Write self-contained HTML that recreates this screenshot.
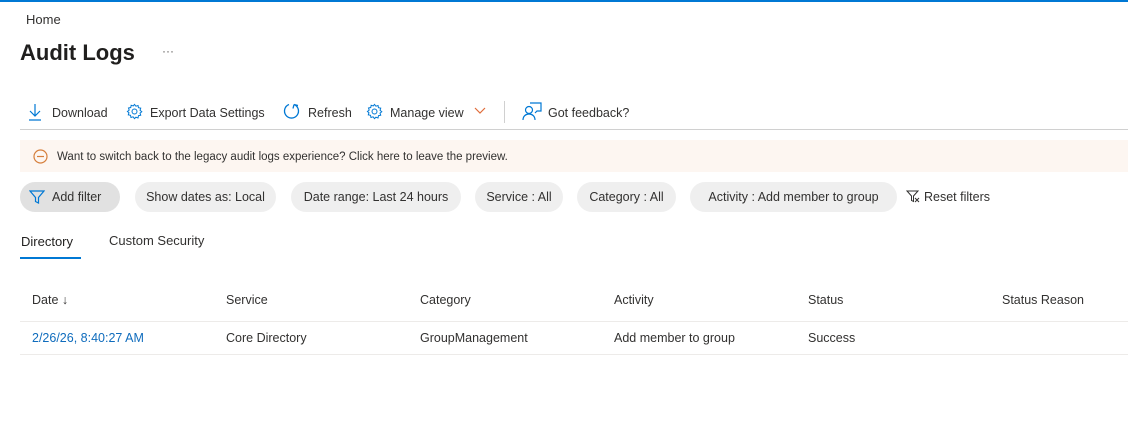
<!DOCTYPE html>
<html><head><meta charset="utf-8"><style>
*{margin:0;padding:0;box-sizing:border-box}
body{width:1128px;height:424px;background:#fff;font-family:"Liberation Sans",sans-serif;color:#323130;position:relative;overflow:hidden;font-size:12.5px}
.a{position:absolute;white-space:nowrap}
.chip{position:absolute;top:182px;height:30px;border-radius:15px;background:#efefef;display:flex;align-items:center;justify-content:center;font-size:12.5px;color:#323130}
.ic{position:absolute}
</style></head><body>
<div class="a" style="left:0;top:0;width:1128px;height:2px;background:#0078d4"></div>
<div class="a" style="left:26px;top:12px;font-size:13px;color:#323130">Home</div>
<div class="a" style="left:20px;top:40px;font-size:22px;font-weight:bold;color:#201f1e">Audit Logs</div>
<div class="a" style="left:162px;top:44px;font-size:12px;color:#605e5c">···</div>

<svg class="ic" style="left:28px;top:103px" width="14" height="18" viewBox="0 0 14 18"><path d="M7 1v12M2 8l5 5 5-5M1 17h12" fill="none" stroke="#0078d4" stroke-width="1.2"/></svg>
<div class="a" style="left:52px;top:106px">Download</div>
<svg class="ic" style="left:126px;top:103px" width="17" height="17" viewBox="0 0 24 24"><path d="M12 2l2 2.5 3-1 .6 3.2 3.2.6-1 3 2.5 2-2.5 2 1 3-3.2.6-.6 3.2-3-1L12 22l-2-2.5-3 1-.6-3.2-3.2-.6 1-3L2 12l2.5-2-1-3 3.2-.6L7.3 3.2l3 1z" fill="none" stroke="#0078d4" stroke-width="1.4"/><circle cx="12" cy="12" r="3.5" fill="none" stroke="#0078d4" stroke-width="1.4"/></svg>
<div class="a" style="left:150px;top:106px">Export Data Settings</div>
<svg class="ic" style="left:283px;top:102px" width="17" height="18" viewBox="0 0 17 18"><path d="M6 2.5A7 7 0 1 0 11 2.5M11 2.5l-1 4M11 2.5l4 1" fill="none" stroke="#0078d4" stroke-width="1.3"/></svg>
<div class="a" style="left:308px;top:106px">Refresh</div>
<svg class="ic" style="left:366px;top:103px" width="17" height="17" viewBox="0 0 24 24"><path d="M12 2l2 2.5 3-1 .6 3.2 3.2.6-1 3 2.5 2-2.5 2 1 3-3.2.6-.6 3.2-3-1L12 22l-2-2.5-3 1-.6-3.2-3.2-.6 1-3L2 12l2.5-2-1-3 3.2-.6L7.3 3.2l3 1z" fill="none" stroke="#0078d4" stroke-width="1.4"/><circle cx="12" cy="12" r="3.5" fill="none" stroke="#0078d4" stroke-width="1.4"/></svg>
<div class="a" style="left:390px;top:106px">Manage view</div>
<svg class="ic" style="left:474px;top:107px" width="12" height="8" viewBox="0 0 12 8"><path d="M1 1l5 5 5-5" fill="none" stroke="#e06c3a" stroke-width="1.2"/></svg>
<div class="a" style="left:504px;top:101px;width:1px;height:22px;background:#d0d0d0"></div>
<svg class="ic" style="left:522px;top:102px" width="20" height="19" viewBox="0 0 20 19"><circle cx="7" cy="8" r="3.5" fill="none" stroke="#0078d4" stroke-width="1.2"/><path d="M1 18c0-4 3-6 6-6s6 2 6 6M8 1h11v8h-4l-2 2" fill="none" stroke="#0078d4" stroke-width="1.2"/></svg>
<div class="a" style="left:548px;top:106px">Got feedback?</div>
<div class="a" style="left:20px;top:129px;width:1108px;height:1px;background:#d0d0d0"></div>

<div class="a" style="left:20px;top:140px;width:1108px;height:32px;background:#fdf6f1"></div>
<svg class="ic" style="left:33px;top:149px" width="15" height="15" viewBox="0 0 15 15"><circle cx="7.5" cy="7.5" r="6.5" fill="none" stroke="#d67f3c" stroke-width="1.2"/><path d="M4 7.5h7" stroke="#d67f3c" stroke-width="1.2"/></svg>
<div class="a" style="left:57px;top:151px;font-size:11.5px">Want to switch back to the legacy audit logs experience? Click here to leave the preview.</div>

<div class="chip" style="left:20px;width:100px;background:#e1e1e1;justify-content:flex-start;padding-left:9px">
<svg width="16" height="16" viewBox="0 0 16 16" style="margin-right:7px"><path d="M1 2h14L9.5 8.5V14l-3-1.5V8.5z" fill="none" stroke="#0078d4" stroke-width="1.2"/></svg>Add filter</div>
<div class="chip" style="left:135px;width:141px">Show dates as: Local</div>
<div class="chip" style="left:291px;width:170px">Date range: Last 24 hours</div>
<div class="chip" style="left:475px;width:88px">Service : All</div>
<div class="chip" style="left:577px;width:99px">Category : All</div>
<div class="chip" style="left:690px;width:207px">Activity : Add member to group</div>
<svg class="ic" style="left:906px;top:190px" width="14" height="13" viewBox="0 0 14 13"><path d="M1 1h11L7.5 6v5.5L5.5 10.5V6z" fill="none" stroke="#323130" stroke-width="1"/><path d="M9 8l4 4M13 8l-4 4" stroke="#323130" stroke-width="1"/></svg>
<div class="a" style="left:924px;top:190px">Reset filters</div>

<div class="a" style="left:21px;top:234px;font-size:13px;color:#201f1e">Directory</div>
<div class="a" style="left:109px;top:233px;font-size:13px">Custom Security</div>
<div class="a" style="left:20px;top:257px;width:61px;height:2px;background:#0078d4"></div>

<div class="a" style="left:32px;top:293px">Date ↓</div>
<div class="a" style="left:226px;top:293px">Service</div>
<div class="a" style="left:420px;top:293px">Category</div>
<div class="a" style="left:614px;top:293px">Activity</div>
<div class="a" style="left:808px;top:293px">Status</div>
<div class="a" style="left:1002px;top:293px">Status Reason</div>
<div class="a" style="left:20px;top:321px;width:1108px;height:1px;background:#edebe9"></div>
<div class="a" style="left:32px;top:331px;color:#0f6cbd">2/26/26, 8:40:27 AM</div>
<div class="a" style="left:226px;top:331px">Core Directory</div>
<div class="a" style="left:420px;top:331px">GroupManagement</div>
<div class="a" style="left:614px;top:331px">Add member to group</div>
<div class="a" style="left:808px;top:331px">Success</div>
<div class="a" style="left:20px;top:354px;width:1108px;height:1px;background:#edebe9"></div>
</body></html>
